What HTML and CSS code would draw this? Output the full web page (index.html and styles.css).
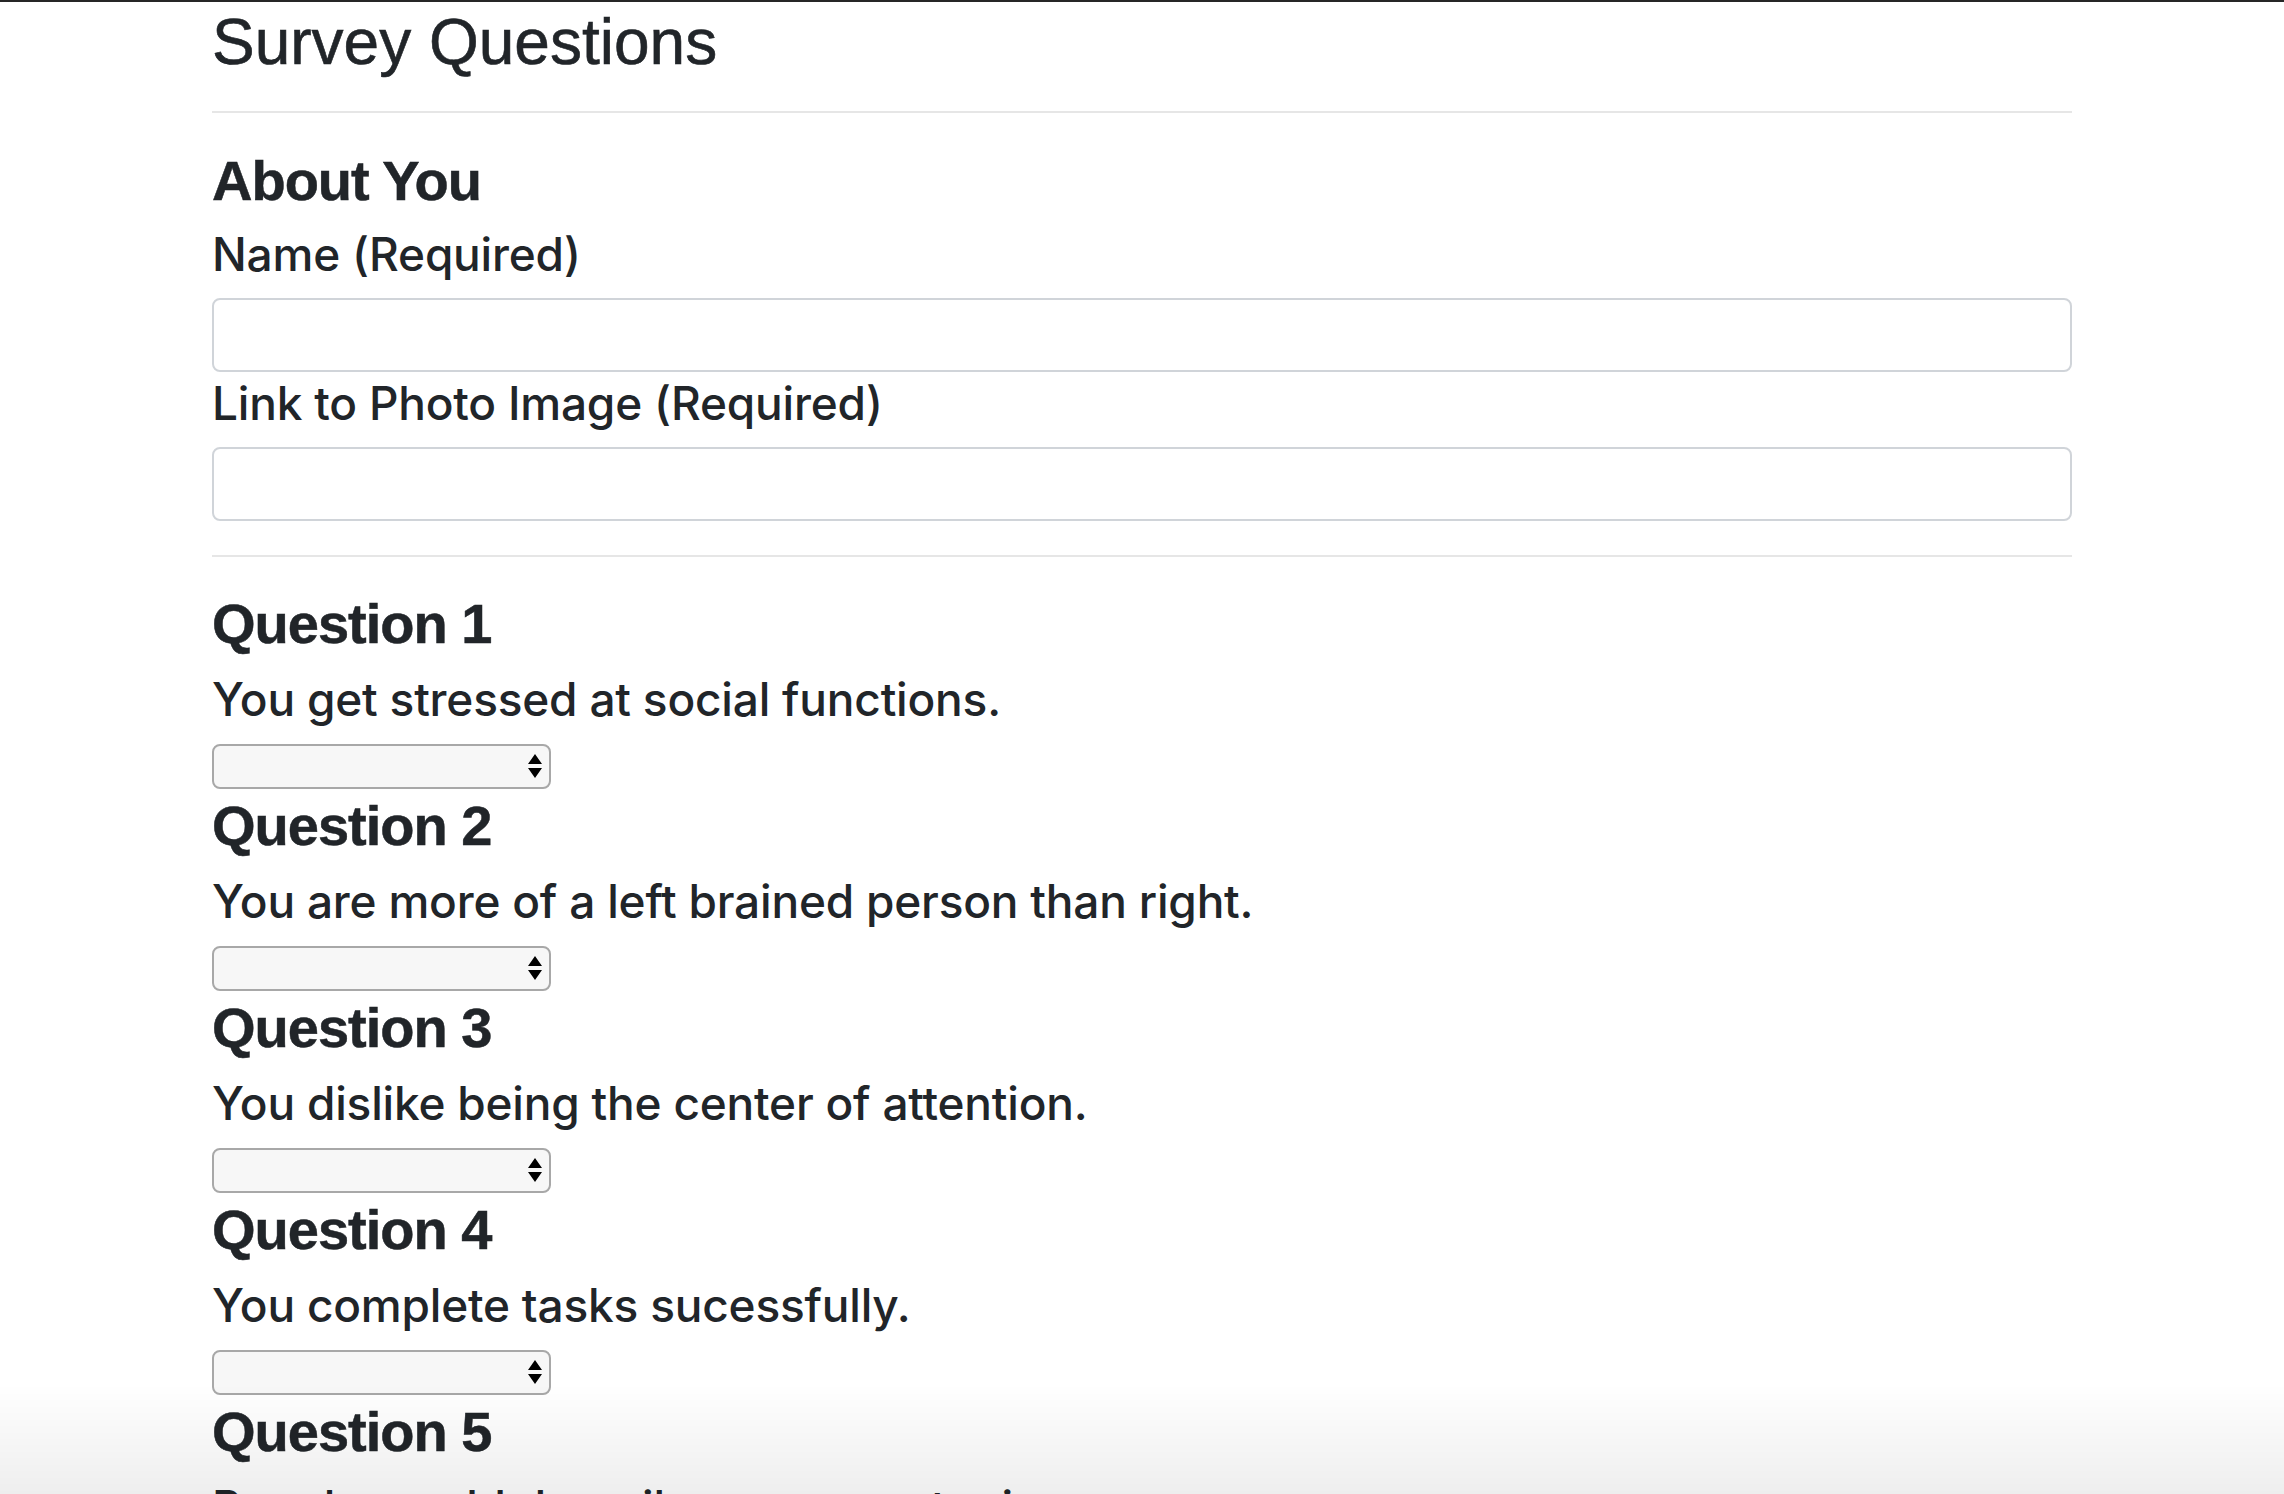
FILE: index.html
```html
<!DOCTYPE html>
<html lang="en">
<head>
<meta charset="utf-8">
<title>Survey Questions</title>
<link rel="stylesheet" href="styles.css">
</head>
<body>
<div class="topbar"></div>
<main class="container">
  <h1 class="title">Survey Questions</h1>
  <hr class="rule rule-top">
  <section class="about">
    <h4 class="heading">About You</h4>
    <div class="field">
      <label class="label" for="name">Name (Required)</label>
      <input class="input" id="name" type="text">
    </div>
    <div class="field">
      <label class="label" for="photo">Link to Photo Image (Required)</label>
      <input class="input" id="photo" type="text">
    </div>
  </section>
  <hr class="rule rule-mid">
  <section class="questions">
    <div class="question">
      <h4 class="heading">Question 1</h4>
      <p class="prompt">You get stressed at social functions.</p>
      <div class="select-wrap"><select class="select"><option></option><option>1 (Strongly Disagree)</option><option>2</option><option>3</option><option>4</option><option>5 (Strongly Agree)</option></select><svg class="arrows" viewBox="0 0 14 26" aria-hidden="true"><path d="M7 1 L14 11 L0 11 Z M0 15 L14 15 L7 25 Z" fill="#000"/></svg></div>
    </div>
    <div class="question">
      <h4 class="heading">Question 2</h4>
      <p class="prompt">You are more of a left brained person than right.</p>
      <div class="select-wrap"><select class="select"><option></option><option>1 (Strongly Disagree)</option><option>2</option><option>3</option><option>4</option><option>5 (Strongly Agree)</option></select><svg class="arrows" viewBox="0 0 14 26" aria-hidden="true"><path d="M7 1 L14 11 L0 11 Z M0 15 L14 15 L7 25 Z" fill="#000"/></svg></div>
    </div>
    <div class="question">
      <h4 class="heading">Question 3</h4>
      <p class="prompt">You dislike being the center of attention.</p>
      <div class="select-wrap"><select class="select"><option></option><option>1 (Strongly Disagree)</option><option>2</option><option>3</option><option>4</option><option>5 (Strongly Agree)</option></select><svg class="arrows" viewBox="0 0 14 26" aria-hidden="true"><path d="M7 1 L14 11 L0 11 Z M0 15 L14 15 L7 25 Z" fill="#000"/></svg></div>
    </div>
    <div class="question">
      <h4 class="heading">Question 4</h4>
      <p class="prompt">You complete tasks sucessfully.</p>
      <div class="select-wrap"><select class="select"><option></option><option>1 (Strongly Disagree)</option><option>2</option><option>3</option><option>4</option><option>5 (Strongly Agree)</option></select><svg class="arrows" viewBox="0 0 14 26" aria-hidden="true"><path d="M7 1 L14 11 L0 11 Z M0 15 L14 15 L7 25 Z" fill="#000"/></svg></div>
    </div>
    <div class="question">
      <h4 class="heading">Question 5</h4>
      <p class="prompt">People would describe you as outgoing.</p>
      <div class="select-wrap"><select class="select"><option></option><option>1 (Strongly Disagree)</option><option>2</option><option>3</option><option>4</option><option>5 (Strongly Agree)</option></select><svg class="arrows" viewBox="0 0 14 26" aria-hidden="true"><path d="M7 1 L14 11 L0 11 Z M0 15 L14 15 L7 25 Z" fill="#000"/></svg></div>
    </div>
  </section>
</main>
<div class="fade"></div>
</body>
</html>
```
FILE: styles.css
```css
html, body {
  margin: 0;
  padding: 0;
  background: #ffffff;
}
body {
  font-family: Inter, "Noto Sans", sans-serif;
  color: #212529;
  overflow: hidden;
}
.topbar {
  height: 2px;
  background: #262626;
}
.container {
  width: 1860px;
  margin: 0 auto;
}
.title {
  font-family: "Liberation Sans", Arial, sans-serif;
  font-size: 64px;
  font-weight: 400;
  line-height: 76.8px;
  margin: 2px 0 0;
  -webkit-text-stroke: 0.6px #212529;
}
.rule {
  border: 0;
  border-top: 2px solid #e6e6e6;
  height: 0;
  margin: 0;
}
.rule-top {
  margin-top: 30px;
}
.rule-mid {
  margin-top: 34px;
}
.about {
  margin-top: 38px;
}
.heading {
  font-family: "Liberation Sans", Arial, sans-serif;
  font-size: 56px;
  font-weight: 700;
  letter-spacing: -1px;
  line-height: 60px;
  margin: 0 0 16px;
  -webkit-text-stroke: 0.5px #212529;
}
.question .heading {
  margin-bottom: 18px;
}
.field + .field {
  margin-top: 4px;
}
.label {
  display: block;
  font-size: 46px;
  font-weight: 500;
  letter-spacing: -0.2px;
  line-height: 55px;
  margin: 0 0 16px;
}
.input {
  display: block;
  box-sizing: border-box;
  width: 100%;
  height: 74px;
  border: 2px solid #d0d4d9;
  border-radius: 8px;
  background: #fff;
  margin: 0;
  padding: 0 18px;
  font: inherit;
}
.questions {
  margin-top: 37px;
}
.question + .question {
  margin-top: 7px;
}
.prompt {
  font-size: 46px;
  font-weight: 500;
  letter-spacing: -0.2px;
  line-height: 55px;
  margin: 0 0 17px;
}
.select-wrap {
  position: relative;
  width: 339px;
  height: 45px;
}
.select {
  appearance: none;
  -webkit-appearance: none;
  box-sizing: border-box;
  width: 100%;
  height: 100%;
  border: 2px solid #a8a8a8;
  border-radius: 8px;
  background: #f7f7f7;
  margin: 0;
  padding: 0 12px;
  font-family: Inter, sans-serif;
  font-size: 22px;
  color: #000;
}
.arrows {
  position: absolute;
  right: 9px;
  top: 9px;
  width: 14px;
  height: 26px;
  pointer-events: none;
}
.fade {
  position: fixed;
  left: 0;
  right: 0;
  bottom: 0;
  height: 110px;
  background: linear-gradient(to bottom, rgba(0,0,0,0), rgba(0,0,0,0.065));
  pointer-events: none;
}
```
